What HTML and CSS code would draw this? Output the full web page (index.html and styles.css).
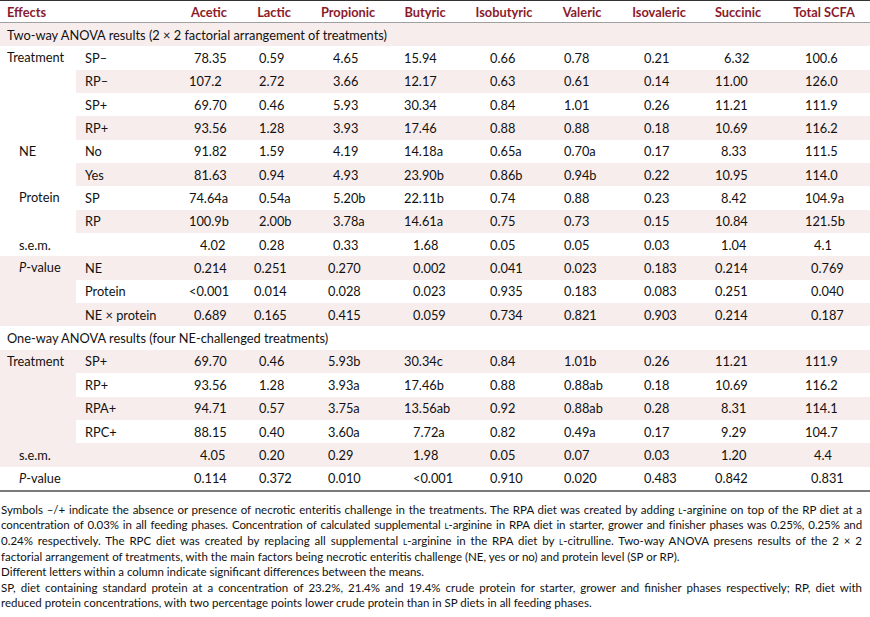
FILE: index.html
```html
<!DOCTYPE html>
<html>
<head>
<meta charset="utf-8">
<link rel="stylesheet" href="styles.css">
</head>
<body>
<table class="scfa">
<colgroup>
<col class="w1"><col class="w2"><col class="w3"><col class="w4"><col class="w5"><col class="w6"><col class="w7"><col class="w8"><col class="w9"><col class="w10"><col class="w11">
</colgroup>
<thead>
<tr class="head">
<th colspan="2" class="eff">Effects</th><th>Acetic</th><th>Lactic</th><th>Propionic</th><th>Butyric</th><th>Isobutyric</th><th>Valeric</th><th>Isovaleric</th><th>Succinic</th><th>Total SCFA</th>
</tr>
</thead>
<tbody>
<tr class="sh"><td colspan="11" class="sec">Two-way ANOVA results (2 × 2 factorial arrangement of treatments)</td></tr>
<tr><td rowspan="4" class="treat">Treatment</td><td class="sub">SP–</td><td>78.35</td><td>0.59</td><td>4.65</td><td>15.94</td><td>0.66</td><td>0.78</td><td>0.21</td><td class="rr">6.32</td><td>100.6</td></tr>
<tr class="sh"><td class="sub">RP–</td><td class="l">107.2</td><td>2.72</td><td>3.66</td><td>12.17</td><td>0.63</td><td>0.61</td><td>0.14</td><td>11.00</td><td>126.0</td></tr>
<tr><td class="sub">SP+</td><td>69.70</td><td>0.46</td><td>5.93</td><td>30.34</td><td>0.84</td><td>1.01</td><td>0.26</td><td>11.21</td><td>111.9</td></tr>
<tr class="sh"><td class="sub">RP+</td><td>93.56</td><td>1.28</td><td>3.93</td><td>17.46</td><td>0.88</td><td>0.88</td><td>0.18</td><td>10.69</td><td>116.2</td></tr>
<tr><td rowspan="2" class="lab">NE</td><td class="sub">No</td><td>91.82</td><td>1.59</td><td>4.19</td><td>14.18a</td><td>0.65a</td><td>0.70a</td><td>0.17</td><td class="r">8.33</td><td>111.5</td></tr>
<tr class="sh"><td class="sub">Yes</td><td>81.63</td><td>0.94</td><td>4.93</td><td>23.90b</td><td>0.86b</td><td>0.94b</td><td>0.22</td><td>10.95</td><td>114.0</td></tr>
<tr><td rowspan="2" class="lab">Protein</td><td class="sub">SP</td><td class="l">74.64a</td><td>0.54a</td><td>5.20b</td><td>22.11b</td><td>0.74</td><td>0.88</td><td>0.23</td><td class="r">8.42</td><td>104.9a</td></tr>
<tr class="sh"><td class="sub">RP</td><td class="l">100.9b</td><td>2.00b</td><td>3.78a</td><td>14.61a</td><td>0.75</td><td>0.73</td><td>0.15</td><td>10.84</td><td>121.5b</td></tr>
<tr><td colspan="2" class="lab">s.e.m.</td><td class="r">4.02</td><td>0.28</td><td>0.33</td><td class="rr">1.68</td><td>0.05</td><td>0.05</td><td>0.03</td><td class="r">1.04</td><td class="rr">4.1</td></tr>
<tr class="sh"><td rowspan="3" class="lab"><i>P</i>-value</td><td class="sub">NE</td><td>0.214</td><td class="l">0.251</td><td class="l">0.270</td><td class="rr">0.002</td><td>0.041</td><td>0.023</td><td>0.183</td><td>0.214</td><td class="r">0.769</td></tr>
<tr><td class="sub">Protein</td><td class="l">&lt;0.001</td><td class="l">0.014</td><td class="l">0.028</td><td class="rr">0.023</td><td>0.935</td><td>0.183</td><td>0.083</td><td>0.251</td><td class="r">0.040</td></tr>
<tr class="sh"><td class="sub">NE × protein</td><td>0.689</td><td class="l">0.165</td><td class="l">0.415</td><td class="rr">0.059</td><td>0.734</td><td>0.821</td><td>0.903</td><td>0.214</td><td class="r">0.187</td></tr>
<tr><td colspan="11" class="sec">One-way ANOVA results (four NE-challenged treatments)</td></tr>
<tr class="sh"><td rowspan="4" class="treat">Treatment</td><td class="sub">SP+</td><td>69.70</td><td>0.46</td><td class="l">5.93b</td><td>30.34c</td><td>0.84</td><td>1.01b</td><td>0.26</td><td>11.21</td><td>111.9</td></tr>
<tr><td class="sub">RP+</td><td>93.56</td><td>1.28</td><td class="l">3.93a</td><td>17.46b</td><td>0.88</td><td>0.88ab</td><td>0.18</td><td>10.69</td><td>116.2</td></tr>
<tr class="sh"><td class="sub">RPA+</td><td>94.71</td><td>0.57</td><td class="l">3.75a</td><td>13.56ab</td><td>0.92</td><td>0.88ab</td><td>0.28</td><td class="r">8.31</td><td>114.1</td></tr>
<tr><td class="sub">RPC+</td><td>88.15</td><td>0.40</td><td class="l">3.60a</td><td class="rr">7.72a</td><td>0.82</td><td>0.49a</td><td>0.17</td><td class="r">9.29</td><td>104.7</td></tr>
<tr class="sh"><td colspan="2" class="lab">s.e.m.</td><td class="r">4.05</td><td>0.20</td><td class="l">0.29</td><td class="rr">1.98</td><td>0.05</td><td>0.07</td><td>0.03</td><td class="r">1.20</td><td class="rr">4.4</td></tr>
<tr><td colspan="2" class="lab"><i>P</i>-value</td><td>0.114</td><td>0.372</td><td class="l">0.010</td><td class="rr">&lt;0.001</td><td>0.910</td><td>0.020</td><td>0.483</td><td>0.842</td><td class="r">0.831</td></tr>
</tbody>
</table>
<div class="notes">
<span class="ln j">Symbols –/+ indicate the absence or presence of necrotic enteritis challenge in the treatments. The RPA diet was created by adding <span class="sc">l</span>-arginine on top of the RP diet at a</span>
<span class="ln j tight">concentration of 0.03% in all feeding phases. Concentration of calculated supplemental <span class="sc">l</span>-arginine in RPA diet in starter, grower and finisher phases was 0.25%, 0.25% and</span>
<span class="ln j">0.24% respectively. The RPC diet was created by replacing all supplemental <span class="sc">l</span>-arginine in the RPA diet by <span class="sc">l</span>-citrulline. Two-way ANOVA presens results of the 2 × 2</span>
<span class="ln">factorial arrangement of treatments, with the main factors being necrotic enteritis challenge (NE, yes or no) and protein level (SP or RP).</span>
<span class="ln">Different letters within a column indicate significant differences between the means.</span>
<span class="ln j">SP, diet containing standard protein at a concentration of 23.2%, 21.4% and 19.4% crude protein for starter, grower and finisher phases respectively; RP, diet with</span>
<span class="ln">reduced protein concentrations, with two percentage points lower crude protein than in SP diets in all feeding phases.</span>
</div>
</body>
</html>
```
FILE: styles.css
```css
html, body {
  margin: 0;
  padding: 0;
  background: #ffffff;
}
body {
  font-family: "Lato", "Open Sans", sans-serif;
  color: #111111;
  width: 870px;
}
.scfa {
  width: 870px;
  border-collapse: collapse;
  table-layout: fixed;
  font-size: 12.8px;
  border-top: 1px solid #333333;
  border-bottom: 2px solid #7a7a7a;
}
.w1 { width: 76px; }
.w2 { width: 104px; }
.w3 { width: 58px; }
.w4 { width: 72px; }
.w5 { width: 76px; }
.w6 { width: 78px; }
.w7 { width: 80px; }
.w8 { width: 76px; }
.w9 { width: 78px; }
.w10 { width: 80px; }
.w11 { width: 92px; }

.head th {
  height: 21px;
  padding: 0;
  color: #8b1a2c;
  font-weight: 700;
  text-align: center;
  border-bottom: 1px solid #a0a0a0;
  white-space: nowrap;
}
.head th.eff {
  text-align: left;
  padding-left: 7px;
}
.scfa td {
  height: 23.35px;
  padding: 0 0 0 calc(var(--p, 0px) + var(--s, 0px));
  white-space: nowrap;
  vertical-align: middle;
  text-align: left;
}
.scfa td[rowspan] {
  vertical-align: top;
  line-height: 23.35px;
}
.scfa tr.sh > td {
  background: #f8eded;
}
.scfa td:nth-last-child(9) { --p: 14px; }
.scfa td:nth-last-child(8) { --p: 21px; }
.scfa td:nth-last-child(7) { --p: 23px; }
.scfa td:nth-last-child(6) { --p: 18px; }
.scfa td:nth-last-child(5) { --p: 26px; }
.scfa td:nth-last-child(4) { --p: 20px; }
.scfa td:nth-last-child(3) { --p: 24px; }
.scfa td:nth-last-child(2) { --p: 17px; }
.scfa td:nth-last-child(1) { --p: 27px; }
.scfa td.l { --s: -5px; }
.scfa td.r { --s: 6px; }
.scfa td.rr { --s: 9px; }
.scfa td.sec { --p: 7px; }
.scfa td.treat { --p: 7px; }
.scfa td.lab { --p: 19px; }
.scfa td.sub { --p: 9px; }

.notes {
  font-size: 11.5px;
  line-height: 15.6px;
  padding: 10px 8px 0 1px;
}
.ln {
  display: block;
}
.ln.j {
  text-align: justify;
  text-align-last: justify;
}
.ln.tight {
  letter-spacing: -0.1px;
}
.sc {
  font-variant: small-caps;
}
```
